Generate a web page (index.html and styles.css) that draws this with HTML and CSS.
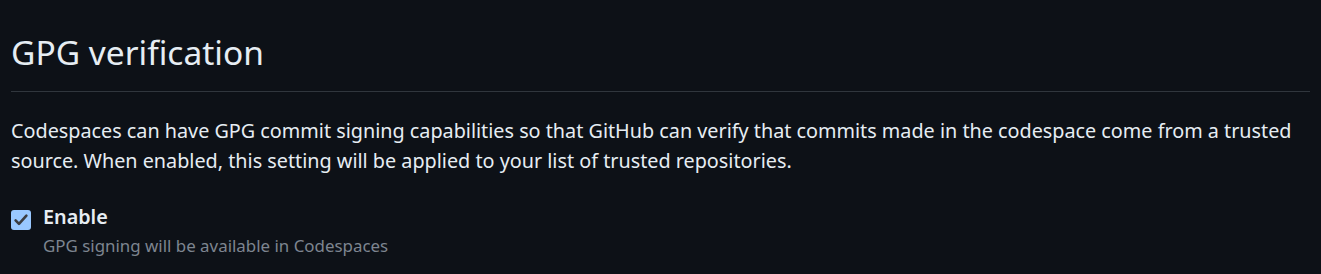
FILE: index.html
```html
<!DOCTYPE html>
<html lang="en">
<head>
<meta charset="utf-8">
<title>GPG verification</title>
<link rel="stylesheet" href="styles.css">
</head>
<body>
<main class="page">
  <div class="subhead">
    <h2 class="subhead-heading">GPG verification</h2>
  </div>
  <p class="description">Codespaces can have GPG commit signing capabilities so that GitHub can verify that commits made in the codespace come from a trusted source. When enabled, this setting will be applied to your list of trusted repositories.</p>
  <div class="form-checkbox">
    <label class="check-label">
      <span class="checkbox" role="checkbox" aria-checked="true">
        <svg viewBox="0 0 20 20" width="20" height="20" aria-hidden="true"><path d="M4.6 10.4l3.4 3.5 7.4-8.2" fill="none" stroke="#3b3d41" stroke-width="2.6" stroke-linecap="round" stroke-linejoin="round"/></svg>
      </span>
      <span class="check-text">Enable</span>
    </label>
    <p class="note">GPG signing will be available in Codespaces</p>
  </div>
</main>
</body>
</html>
```
FILE: styles.css
```css
html, body {
  margin: 0;
  padding: 0;
  background: #0d1117;
}
body {
  font-family: "Noto Sans", "Open Sans", "Liberation Sans", sans-serif;
  color: #e6edf3;
  font-size: 19.8px;
  line-height: 30px;
}
.page {
  padding: 27px 11px 0 11px;
}
.subhead {
  border-bottom: 1px solid #30363d;
  padding-bottom: 14px;
  margin-bottom: 24px;
}
.subhead-heading {
  margin: 0;
  font-size: 33.5px;
  font-weight: 400;
  line-height: 50px;
}
.description {
  margin: 0 0 29px 0;
}
.form-checkbox {
  padding-left: 32px;
}
.check-label {
  display: flex;
  align-items: flex-start;
  margin-left: -32px;
  gap: 12px;
  font-weight: 600;
  line-height: 24px;
}
.checkbox {
  display: flex;
  width: 20px;
  height: 20px;
  margin-top: 5px;
  border-radius: 3px;
  background: #99c8ff;
}
.note {
  margin: 3px 0 0 0;
  font-size: 16.9px;
  color: #7d8590;
  line-height: 26px;
}
```
